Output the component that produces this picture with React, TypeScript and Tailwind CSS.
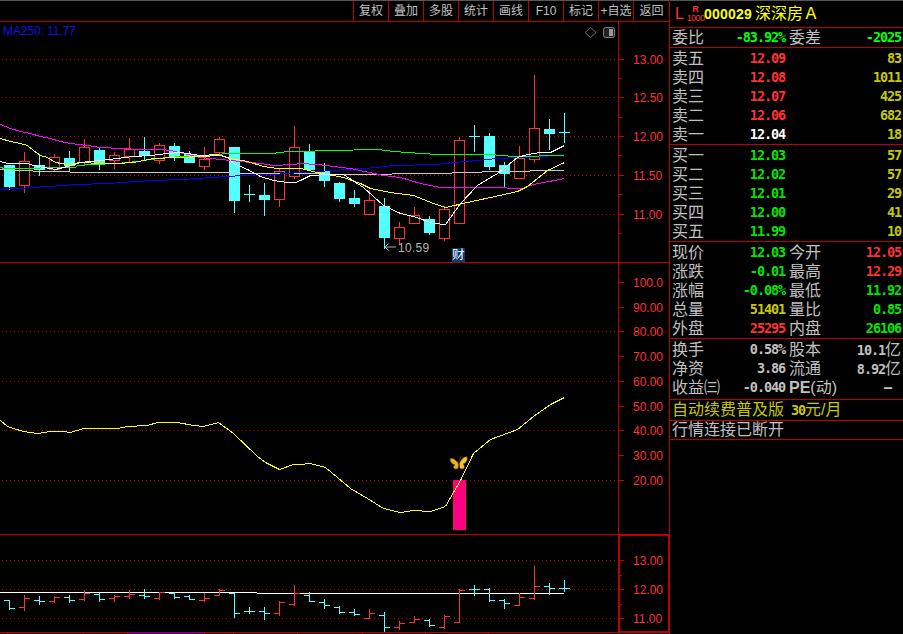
const RED = "#ff3232";
const CYAN = "#54ffff";
const LINE = "#c00000";

type Candle = ["r" | "c", number, number, number, number];
const candles: Candle[] = [
  ["c", 165, 186, 165, 189], ["r", 161, 185, 152, 192], ["c", 165, 169, 155, 175], ["r", 157, 169, 154, 171],
  ["c", 158, 165, 151, 171], ["r", 147, 162, 139, 165], ["c", 150, 163, 147, 169], ["r", 155, 160, 152, 168],
  ["r", 149, 156, 138, 161], ["c", 151, 155, 137, 159], ["r", 145, 160, 143, 163], ["c", 146, 157, 143, 160],
  ["c", 154, 162, 151, 162], ["r", 159, 166, 147, 169], ["r", 139, 152, 137, 153], ["c", 147, 200, 147, 212],
  ["c", 194, 194, 185, 201], ["c", 195, 199, 183, 215], ["r", 171, 199, 169, 206], ["r", 147, 176, 126, 178],
  ["c", 152, 169, 144, 169], ["c", 171, 180, 163, 186], ["c", 183, 198, 182, 201], ["c", 198, 203, 190, 206],
  ["r", 200, 214, 190, 214], ["c", 206, 237, 198, 248], ["r", 227, 238, 222, 244], ["r", 215, 223, 207, 223],
  ["c", 219, 232, 216, 234], ["r", 209, 238, 206, 240], ["r", 140, 223, 137, 223], ["c", 136, 136, 125, 151],
  ["c", 136, 166, 133, 169], ["c", 165, 173, 162, 186], ["r", 158, 178, 146, 178], ["r", 128, 159, 75, 162],
  ["c", 129, 133, 119, 149], ["c", 132, 132, 113, 142],
];

const maLines: { color: string; points: string }[] = [
  { color: "#c8c8c8", points: "0,169 17,170 47,171 92,172 227,172 242,173 300,173 347,174 437,173 467,172 497,171 564,170" },
  { color: "#0000ff", points: "0,189 17,188 32,187 47,186 62,185 77,184 107,183 122,182 137,181 152,180 182,179 197,178 212,177 227,176 242,175 272,174 287,173 300,172 317,171 347,169 377,167 392,165 437,164 452,162 467,161 497,158 542,156 564,154" },
  { color: "#00ff00", points: "0,167 4,168 75,167 77,165 93,164 117,163 137,161 150,159 167,157 183,156 207,155 227,153 272,153 287,151 300,151 330,150 377,149 393,151 422,153 437,154 490,154 513,156 564,155" },
  { color: "#ff00ff", points: "0,124 10,128 20,131 30,133 40,136 50,138 60,141 70,143 87,145 100,147 120,148 140,149 160,149 170,150 183,153 200,157 220,159 240,161 260,163 273,165 293,164 300,163 317,164 350,168 383,175 400,177 420,183 440,187 467,187 500,187 513,188 522,188 533,184 564,178" },
  { color: "#ffff00", points: "0,138 10,141 20,143 27,145 33,150 40,155 47,157 55,162 67,164 80,162 100,163 117,163 133,162 153,158 177,157 200,156 220,155 230,158 247,161 263,166 277,168 300,168 317,172 343,177 360,183 370,188 390,192 413,195 433,203 445,207 467,202 490,197 517,191 527,186 547,170 564,162" },
  { color: "#ffffff", points: "0,161 7,163 27,163 33,165 43,167 55,169 67,166 80,162 100,160 117,158 133,156 150,155 167,153 180,152 200,155 217,154 227,157 233,163 247,169 260,176 273,180 287,182 295,182 300,180 310,175 327,174 343,174 363,187 383,205 400,213 413,216 433,223 445,224 460,203 477,185 497,173 517,157 527,154 540,152 550,152 564,145" },
];

const oscLine =
  "0,420 7,426 13,428 23,431 37,433 50,431 62,431 70,432 83,428 117,428 127,426 147,425 157,422 177,422 193,425 203,426 218,422 233,433 257,456 265,462 279,469 293,464 300,464 310,463 325,467 337,477 350,488 367,498 383,508 400,512 413,510 430,511 445,506 453,492 460,480 473,453 490,439 517,429 533,416 550,404 564,397";

function Dots({ ys }: { ys: number[] }) {
  return (
    <>
      {ys.map((y) => (
        <line key={y} x1={2} x2={618} y1={y + 0.5} y2={y + 0.5} stroke={LINE} strokeDasharray="1 3" />
      ))}
    </>
  );
}

function CandleMark({ c, i }: { c: Candle; i: number }) {
  const [kind, top, bottom, hi, lo] = c;
  const x = 9 + i * 15;
  if (kind === "c") {
    return (
      <g fill={CYAN}>
        <rect x={x} y={hi} width={1} height={lo - hi + 1} />
        <rect x={x - 5} y={top} width={11} height={bottom - top + 1} />
      </g>
    );
  }
  return (
    <g>
      <rect x={x} y={hi} width={1} height={lo - hi + 1} fill={RED} />
      <rect x={x - 4.5} y={top + 0.5} width={10} height={bottom - top} fill="#000" stroke={RED} />
    </g>
  );
}

function Bar({ c, i }: { c: Candle; i: number }) {
  const [kind, top, bottom, hi, lo] = c;
  const x = 9 + i * 15;
  const map = (y: number) => Math.round(589 + (y - 136) * 0.374);
  const open = map(kind === "r" ? bottom : top);
  const close = map(kind === "r" ? top : bottom);
  const color = kind === "r" ? RED : CYAN;
  return (
    <g fill={color}>
      <rect x={x} y={map(hi)} width={1} height={map(lo) - map(hi) + 1} />
      <rect x={x - 5} y={open} width={5} height={1} />
      <rect x={x + 1} y={close} width={5} height={1} />
    </g>
  );
}

function AxisMarks({ marks, minor }: { marks: [number, string][]; minor: number[] }) {
  return (
    <>
      {marks.map(([y, text]) => (
        <g key={text}>
          <rect x={619} y={y} width={5} height={1} fill={LINE} />
          <text x={633} y={y + 5} fill={RED} fontSize={12}>
            {text}
          </text>
        </g>
      ))}
      {minor.map((y) => (
        <rect key={y} x={619} y={y} width={3} height={1} fill={LINE} />
      ))}
    </>
  );
}

function Butterfly() {
  return (
    <g transform="translate(459 463)">
      <path d="M0,1 C-3,-3 -7,-6 -9,-4 C-9,-1 -7,1 -4,2 C-6,3 -6,6 -3,6 C-1,6 0,4 0,1 Z" fill="#eeb020" stroke="#7a5408" strokeWidth={0.6} />
      <path d="M0,1 C2,-3 5,-7 8,-6 C9,-3 7,0 4,1 C6,3 6,6 3,6 C1,6 0,4 0,1 Z" fill="#f6c230" stroke="#7a5408" strokeWidth={0.6} />
      <path d="M0,-2 L0,5" stroke="#3a2804" strokeWidth={1.2} />
      <path d="M0,-2 L2,-7" stroke="#7a5408" strokeWidth={0.6} fill="none" />
    </g>
  );
}

const tools = ["复权", "叠加", "多股", "统计", "画线", "F10", "标记", "+自选", "返回"];
const mono = "font-['DejaVu_Sans_Mono','Noto_Sans_CJK_SC',monospace] text-[13.5px] tracking-[-1.1px] font-bold";
const label = "text-[16px] text-[#c0c0c0] leading-none whitespace-nowrap";

function Book({ name, price, priceColor, qty }: { name: string; price: string; priceColor: string; qty: string }) {
  return (
    <div className="flex h-[19px] items-center px-[2px]">
      <div className="flex w-[113px] items-center justify-between">
        <span className={label}>{name}</span>
        <span className={`${mono} ${priceColor}`}>{price}</span>
      </div>
      <span className={`${mono} flex-1 text-right text-[#c8c800]`}>{qty}</span>
    </div>
  );
}

function Pair({
  a,
  av,
  ac,
  b,
  bv,
  bc,
}: {
  a: string;
  av: React.ReactNode;
  ac: string;
  b: React.ReactNode;
  bv: React.ReactNode;
  bc: string;
}) {
  return (
    <div className="flex h-[19px] items-center px-[2px]">
      <div className="flex w-[113px] items-center justify-between">
        <span className={label}>{a}</span>
        <span className={`${mono} ${ac}`}>{av}</span>
      </div>
      <div className="ml-[4px] flex flex-1 items-center justify-between">
        <span className={label}>{b}</span>
        <span className={`${mono} ${bc}`}>{bv}</span>
      </div>
    </div>
  );
}

export default function App() {
  return (
    <div className="flex h-[634px] w-[903px] overflow-hidden bg-black font-['Liberation_Sans','Noto_Sans_CJK_SC',sans-serif]">
      <div className="flex h-full w-[670px] flex-col border-r border-[#c00000]">
        <div className="flex h-[22px] shrink-0 justify-end border-y border-b-[#c00000] border-t-[#555555]">
          {tools.map((t) => (
            <div
              key={t}
              className="flex h-full w-[35px] items-center justify-center whitespace-nowrap border-l border-[#c00000] text-[12px] text-[#c0c0c0] last:w-[36px]"
            >
              {t}
            </div>
          ))}
        </div>

        <div className="flex h-[241px] shrink-0 border-b border-[#c00000]">
          <svg width={618} height={240} viewBox="0 22 618 240" shapeRendering="crispEdges">
            <Dots ys={[59, 97, 136, 175, 214]} />
            {candles.map((c, i) => (
              <CandleMark key={i} c={c} i={i} />
            ))}
            <g transform="translate(0.5 0.5)">
              {maLines.map((l) => (
                <polyline key={l.color} points={l.points} fill="none" stroke={l.color} />
              ))}
            </g>
            <text x={3} y={35} fill="#1010e0" fontSize={12} letterSpacing={-0.1} shapeRendering="auto">
              MA250: 11.77
            </text>
            <path d="M590.5,27.5 L596,32.5 L590.5,37.5 L585,32.5 Z" fill="none" stroke="#707070" shapeRendering="auto" />
            <rect x={603.5} y={27.5} width={11} height={10} rx={2} fill="#222" stroke="#808080" shapeRendering="auto" />
            <rect x={609} y={29} width={4} height={7} fill="#9a9a9a" />
            <path d="M385,247 H396 M388.5,243.5 L385,247 L388.5,250.5" fill="none" stroke="#b0b0b0" shapeRendering="auto" />
            <text x={398} y={252} fill="#b4b4b4" fontSize={12} letterSpacing={0.3} shapeRendering="auto">
              10.59
            </text>
            <rect x={452} y={248} width={13} height={14} fill="#0b3a6e" />
            <text x={452} y={259} fill="#ffffff" fontSize={12.5} shapeRendering="auto">
              财
            </text>
          </svg>
          <div className="w-[51px] border-l border-[#c00000]">
            <svg width={50} height={240} viewBox="619 22 50 240">
              <AxisMarks
                marks={[
                  [59, "13.00"],
                  [97, "12.50"],
                  [136, "12.00"],
                  [175, "11.50"],
                  [214, "11.00"],
                ]}
                minor={[78, 117, 155, 194, 233]}
              />
            </svg>
          </div>
        </div>

        <div className="flex h-[272px] shrink-0 border-b border-[#c00000]">
          <svg width={618} height={271} viewBox="0 263 618 271" shapeRendering="crispEdges">
            <Dots ys={[331, 381, 430, 480]} />
            <rect x={453} y={480} width={13} height={50} fill="#ff0080" />
            <polyline points={oscLine} fill="none" stroke="#ffff00" transform="translate(0.5 0.5)" />
            <g shapeRendering="auto">
              <Butterfly />
            </g>
          </svg>
          <div className="w-[51px] border-l border-[#c00000]">
            <svg width={50} height={271} viewBox="619 263 50 271">
              <AxisMarks
                marks={[
                  [282, "100.0"],
                  [331, "80.00"],
                  [381, "60.00"],
                  [430, "40.00"],
                  [480, "20.00"],
                ]}
                minor={[]}
              />
              <AxisMarks
                marks={[
                  [307, "90.00"],
                  [356, "70.00"],
                  [406, "50.00"],
                  [455, "30.00"],
                ]}
                minor={[]}
              />
            </svg>
          </div>
        </div>

        <div className="flex h-[98px] shrink-0 border-b border-[#c00000]">
          <svg width={618} height={97} viewBox="0 535 618 97" shapeRendering="crispEdges">
            <Dots ys={[560, 589, 618]} />
            <rect x={0} y={592} width={257} height={1} fill="#fff" />
            <rect x={257} y={593} width={307} height={1} fill="#fff" />
            {candles.map((c, i) => (
              <Bar key={i} c={c} i={i} />
            ))}
          </svg>
          <div className="w-[51px] border-l border-[#c00000]">
            <div className="h-full w-full border border-[#c00000]">
              <svg width={48} height={95} viewBox="620 536 48 95">
                <AxisMarks
                  marks={[
                    [560, "13.00"],
                    [589, "12.00"],
                    [618, "11.00"],
                  ]}
                  minor={[575, 604]}
                />
              </svg>
            </div>
          </div>
        </div>

        <svg width={669} height={1} viewBox="0 633 669 1" shapeRendering="crispEdges" className="shrink-0">
          <rect x={127} y={633} width={77} height={1} fill="#0000c8" />
          {[7, 83, 127, 204, 233, 297, 362, 425, 488].map((x) => (
            <rect key={x} x={x} y={633} width={1} height={1} fill={LINE} />
          ))}
        </svg>
      </div>

      <div className="flex h-full flex-1 flex-col">
        <div className="flex h-[28px] shrink-0 items-center border-y border-b-[#c00000] border-t-[#555555] pl-[5px]">
          <span className="w-[12px] text-[16px] leading-none text-[#ff3232]">L</span>
          <div className="flex w-[17px] flex-col items-center text-[#ff3232]">
            <span className="text-[9px] font-bold leading-[9px]">R</span>
            <span className="text-[9px] leading-[9px] tracking-[-0.6px]">1000</span>
          </div>
          <span className="w-[51px] text-[14px] font-bold leading-none tracking-[0.2px] text-[#ffff00]">000029</span>
          <span className="text-[16px] leading-none text-[#ffff00]">深深房Ａ</span>
        </div>

        <div className="h-[20px] shrink-0 border-b border-[#c00000]">
          <Pair a="委比" av="-83.92%" ac="text-[#00ff00]" b="委差" bv="-2025" bc="text-[#00ff00]" />
        </div>

        <div className="h-[97px] shrink-0 border-b border-[#c00000] pt-px">
          <Book name="卖五" price="12.09" priceColor="text-[#ff3232]" qty="83" />
          <Book name="卖四" price="12.08" priceColor="text-[#ff3232]" qty="1011" />
          <Book name="卖三" price="12.07" priceColor="text-[#ff3232]" qty="425" />
          <Book name="卖二" price="12.06" priceColor="text-[#ff3232]" qty="682" />
          <Book name="卖一" price="12.04" priceColor="text-white" qty="18" />
        </div>

        <div className="h-[97px] shrink-0 border-b border-[#c00000] pt-px">
          <Book name="买一" price="12.03" priceColor="text-[#00e600]" qty="57" />
          <Book name="买二" price="12.02" priceColor="text-[#00e600]" qty="57" />
          <Book name="买三" price="12.01" priceColor="text-[#00e600]" qty="29" />
          <Book name="买四" price="12.00" priceColor="text-[#00e600]" qty="41" />
          <Book name="买五" price="11.99" priceColor="text-[#00e600]" qty="10" />
        </div>

        <div className="h-[97px] shrink-0 border-b border-[#c00000] pt-px">
          <Pair a="现价" av="12.03" ac="text-[#00e600]" b="今开" bv="12.05" bc="text-[#ff3232]" />
          <Pair a="涨跌" av="-0.01" ac="text-[#00e600]" b="最高" bv="12.29" bc="text-[#ff3232]" />
          <Pair a="涨幅" av="-0.08%" ac="text-[#00e600]" b="最低" bv="11.92" bc="text-[#00e600]" />
          <Pair a="总量" av="51401" ac="text-[#c8c800]" b="量比" bv="0.85" bc="text-[#00e600]" />
          <Pair a="外盘" av="25295" ac="text-[#ff3232]" b="内盘" bv="26106" bc="text-[#00e600]" />
        </div>

        <div className="h-[61px] shrink-0 border-b border-[#c00000] pt-px">
          <Pair
            a="换手"
            av="0.58%"
            ac="text-[#c0c0c0]"
            b="股本"
            bv={
              <>
                10.1<span className="text-[16px] font-normal tracking-normal">亿</span>
              </>
            }
            bc="text-[#c0c0c0]"
          />
          <Pair
            a="净资"
            av="3.86"
            ac="text-[#c0c0c0]"
            b="流通"
            bv={
              <>
                8.92<span className="text-[16px] font-normal tracking-normal">亿</span>
              </>
            }
            bc="text-[#c0c0c0]"
          />
          <Pair
            a="收益㈢"
            av="-0.040"
            ac="text-[#c0c0c0]"
            b={
              <>
                <span className="font-bold">PE</span>(动)
              </>
            }
            bv={<span className="mr-[10px]">–</span>}
            bc="text-[#c0c0c0]"
          />
        </div>

        <div className="flex h-[21px] shrink-0 items-center gap-[7px] border-b border-[#c00000] pl-[2px] text-[#c8c800]">
          <span className="text-[16px] leading-none">自动续费普及版</span>
          <span className="text-[16px] leading-none">
            <span className={mono}>30</span>元/月
          </span>
        </div>

        <div className="flex h-[19px] shrink-0 items-center border-b border-[#c00000] pl-[2px] text-[16px] leading-none text-[#c0c0c0]">
          行情连接已断开
        </div>
      </div>
    </div>
  );
}
